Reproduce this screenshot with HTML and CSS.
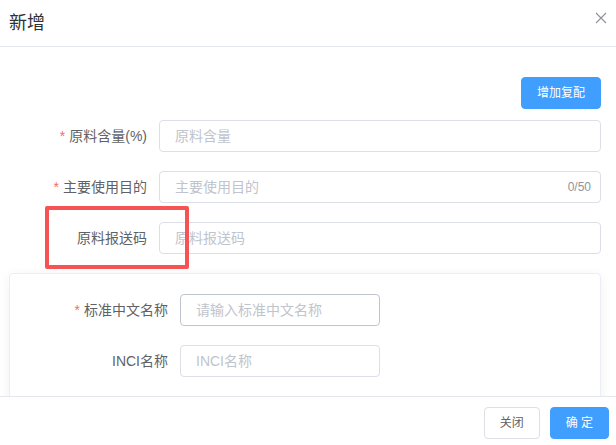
FILE: index.html
```html
<!DOCTYPE html>
<html lang="zh-CN">
<head>
<meta charset="utf-8">
<title>新增</title>
<link rel="stylesheet" href="styles.css">
</head>
<body>
<div class="dialog">
  <div class="dialog-header">
    <span class="dialog-title">新增</span>
    <svg class="close-icon" width="12" height="12" viewBox="0 0 12 12" aria-label="关闭">
      <path d="M1 1 L11 11 M11 1 L1 11" stroke="#909399" stroke-width="1.2" fill="none"/>
    </svg>
  </div>
  <div class="dialog-body">
    <div class="toolbar">
      <button class="btn btn-primary">增加复配</button>
    </div>
    <div class="form-item">
      <label class="form-label"><span class="req">*</span>原料含量(%)</label>
      <div class="input"><input type="text" placeholder="原料含量"></div>
    </div>
    <div class="form-item">
      <label class="form-label"><span class="req">*</span>主要使用目的</label>
      <div class="input"><input type="text" placeholder="主要使用目的"><span class="count">0/50</span></div>
    </div>
    <div class="form-item">
      <label class="form-label">原料报送码</label>
      <div class="input"><input type="text" placeholder="原料报送码"></div>
    </div>
    <div class="card">
      <div class="form-item card-item">
        <label class="form-label"><span class="req">*</span>标准中文名称</label>
        <div class="input input-short input-hover"><input type="text" placeholder="请输入标准中文名称"></div>
      </div>
      <div class="form-item card-item">
        <label class="form-label">INCI名称</label>
        <div class="input input-short"><input type="text" placeholder="INCI名称"></div>
      </div>
    </div>
  </div>
  <div class="dialog-footer">
    <button class="btn btn-default">关闭</button>
    <button class="btn btn-primary">确 定</button>
  </div>
  <div class="annotation"></div>
</div>
</body>
</html>
```

FILE: styles.css
```css
* { box-sizing: border-box; }
html, body { margin: 0; padding: 0; background: #fff; }
body {
  font-family: "Liberation Sans", "Noto Sans CJK SC", sans-serif;
  color: #606266;
}
.dialog {
  position: relative;
  width: 616px;
  height: 445px;
  display: flex;
  flex-direction: column;
  overflow: hidden;
}
.dialog-header {
  height: 47px;
  flex: none;
  border-bottom: 1px solid #e4e7ed;
  display: flex;
  align-items: center;
  justify-content: space-between;
  padding: 0 9px 0 9px;
}
.dialog-title {
  font-size: 18px;
  color: #303133;
  line-height: 24px;
}
.close-icon { display: block; margin-top: -10px; }
.dialog-body {
  flex: 1;
  overflow: hidden;
  padding: 30px 15px 0 9px;
}
.toolbar {
  display: flex;
  justify-content: flex-end;
  margin-bottom: 11px;
}
.btn {
  height: 32px;
  padding: 0 15px;
  font-size: 12px;
  border-radius: 4px;
  border: 1px solid #dcdfe6;
  background: #fff;
  color: #606266;
  font-family: inherit;
  cursor: pointer;
  line-height: 30px;
}
.btn-primary {
  background: #409eff;
  border-color: #409eff;
  color: #fff;
}
.form-item {
  display: flex;
  align-items: center;
  margin-bottom: 19px;
}
.form-label {
  width: 150px;
  flex: none;
  text-align: right;
  padding-right: 12px;
  font-size: 14px;
  color: #606266;
  line-height: 32px;
}
.req {
  color: #f56c6c;
  margin-right: 4px;
}
.input {
  flex: 1;
  height: 32px;
  border: 1px solid #dcdfe6;
  border-radius: 4px;
  display: flex;
  align-items: center;
  padding: 0 9px 0 15px;
  background: #fff;
}
.input input {
  flex: 1;
  min-width: 0;
  border: none;
  outline: none;
  font-family: inherit;
  font-size: 14px;
  color: #606266;
  padding: 0;
  height: 30px;
  background: transparent;
}
.input input::placeholder { color: #c0c4cc; }
.count {
  font-size: 12px;
  color: #909399;
}
.card {
  border: 1px solid #ebeef5;
  border-radius: 4px;
  box-shadow: 0 2px 12px 0 rgba(0, 0, 0, 0.06);
  padding: 20px 20px 20px 0;
  background: #fff;
}
.card-item .form-label { width: 170px; }
.input-short { flex: none; width: 200px; }
.input-hover { border-color: #c0c4cc; }
.dialog-footer {
  flex: none;
  height: 49px;
  border-top: 1px solid #e4e7ed;
  display: flex;
  justify-content: flex-end;
  align-items: flex-start;
  padding: 10px 7px 0 0;
  gap: 10px;
}
.annotation {
  position: absolute;
  left: 45px;
  top: 206px;
  width: 144px;
  height: 63px;
  border: 4px solid #f65355;
  border-radius: 2px;
  pointer-events: none;
}
```
